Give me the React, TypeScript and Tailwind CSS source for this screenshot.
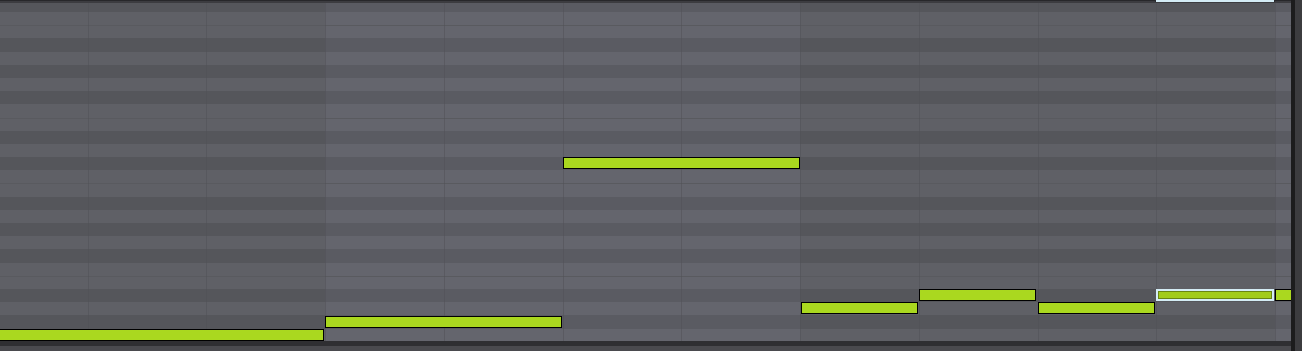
import React from "react";

// piano roll, rows go down from C
const ROW_H = 13.2;
const FIRST_ROW = 9; // partial row at the top
const BEAT = 118.75;
const BAR_START = 325;

const BLACK = [false, false, true, false, true, false, true, false, false, true, false, true];

type Note = { row: number; start: number; end: number; selected?: boolean };

const notes: Note[] = [
    { row: 24, start: -100, end: 324 },
    { row: 23, start: 325, end: 561.5 },
    { row: 11, start: 562.5, end: 799.5 },
    { row: 22, start: 800.5, end: 918 },
    { row: 21, start: 919, end: 1036 },
    { row: 22, start: 1037.5, end: 1155 },
    { row: 21, start: 1156, end: 1274, selected: true },
    { row: 21, start: 1275, end: 1400 },
];

const beatLines = Array.from({ length: 11 }, (_, i) => BAR_START + (i - 2) * BEAT);

function Row({ black, split, first }: { black: boolean; split?: boolean; first?: boolean }) {
    return (
        <div className={`flex shrink-0 ${first ? "h-[9px]" : "h-[13.2px]"} ${split ? "border-t border-[#595a5f]" : ""}`}>
            <div className={`w-[325px] ${black ? "bg-[#55565b]" : "bg-[#5f6066]"}`} />
            <div className={`w-[475px] ${black ? "bg-[#5a5b62]" : "bg-[#64656d]"}`} />
            <div className={`w-[475px] ${black ? "bg-[#55565b]" : "bg-[#5f6066]"}`} />
            <div className={`flex-1 ${black ? "bg-[#5a5b62]" : "bg-[#64656d]"}`} />
        </div>
    );
}

function NoteBox({ note }: { note: Note }) {
    const style = {
        top: FIRST_ROW + note.row * ROW_H,
        left: note.start,
        width: note.end - note.start,
    };
    if (note.selected) {
        return (
            <div
                className="absolute h-[12px] border-2 border-[#d4ecf5] bg-[#6a8612] p-px"
                style={{ ...style, top: style.top - 0.5 }}
            >
                <div className="h-full w-full bg-[#a2cc1b]" />
            </div>
        );
    }
    return <div className="absolute h-[12px] border border-black bg-[#aad81f]" style={style} />;
}

export default function App() {
    return (
        <div className="flex h-[351px] w-[1302px] overflow-hidden bg-[#3b3b3e] font-['Liberation_Sans',sans-serif]">
            <div className="flex w-[1291px] flex-col">
                {/* top edge */}
                <div className="relative h-[3px] shrink-0 border-t border-[#27272a] bg-[#3c3c40]">
                    <div className="absolute left-[1155px] top-[-1px] h-[2px] w-[120px] border-x border-[#2a2a2e] bg-[#d4ecf5]" />
                </div>

                <div className="relative h-[338px] shrink-0 overflow-hidden">
                    <div className="flex flex-col">
                        <Row black first />
                        {Array.from({ length: 25 }, (_, i) => (
                            <Row key={i} black={BLACK[i % 12]} split={i % 12 === 1 || i % 12 === 8} />
                        ))}
                    </div>

                    {beatLines.map((x) => (
                        <div
                            key={x}
                            className="absolute top-0 h-full w-px bg-[#4f5055] opacity-50"
                            style={{ left: x }}
                        />
                    ))}

                    {notes.map((n, i) => (
                        <NoteBox key={i} note={n} />
                    ))}
                </div>

                {/* bottom edge */}
                <div className="h-[5px] shrink-0 bg-[#2f2f32]" />
                <div className="flex-1 bg-[#4a4a4e]" />
            </div>
            <div className="w-[4px] bg-[#1c1c1d]" />
            <div className="flex-1 bg-[#3c3c3f]" />
        </div>
    );
}
